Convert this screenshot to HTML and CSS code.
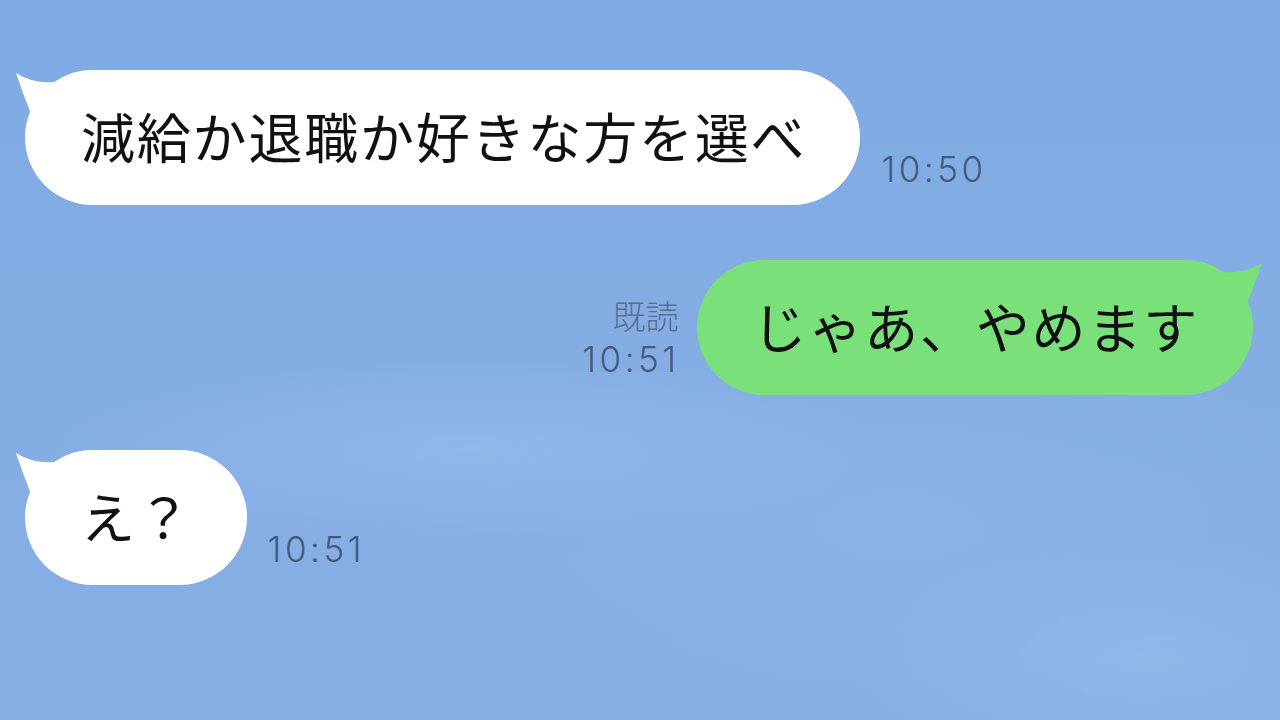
FILE: index.html
```html
<!DOCTYPE html>
<html lang="ja">
<head>
<meta charset="utf-8">
<title>Chat</title>
<link rel="stylesheet" href="styles.css">
</head>
<body>
<main class="chat">
  <div class="row row-left">
    <div class="bubble bubble-white">
      <svg class="tail tail-left" viewBox="0 0 60 60" width="60" height="60"><path d="M1 5 Q18 16 40 14 L52 45 L16 46 Q8 26 1 5 Z"/></svg>
      <span class="msg">減給か退職か好きな方を選べ</span>
    </div>
    <div class="meta"><span class="time">10:50</span></div>
  </div>
  <div class="row row-right">
    <div class="meta meta-right"><span class="read">既読</span><span class="time">10:51</span></div>
    <div class="bubble bubble-green">
      <svg class="tail tail-right" viewBox="0 0 60 60" width="60" height="60"><path d="M59 5 Q42 16 20 14 L8 45 L44 46 Q52 26 59 5 Z"/></svg>
      <span class="msg">じゃあ、やめます</span>
    </div>
  </div>
  <div class="row row-left">
    <div class="bubble bubble-white">
      <svg class="tail tail-left" viewBox="0 0 60 60" width="60" height="60"><path d="M1 5 Q18 16 40 14 L52 45 L16 46 Q8 26 1 5 Z"/></svg>
      <span class="msg">え？</span>
    </div>
    <div class="meta"><span class="time">10:51</span></div>
  </div>
</main>
</body>
</html>
```
FILE: styles.css
```css
html, body {
  margin: 0;
  padding: 0;
  width: 1280px;
  height: 720px;
  overflow: hidden;
}
body {
  background:
    radial-gradient(ellipse 420px 90px at 470px 450px, rgba(160, 196, 240, 0.45), rgba(160, 196, 240, 0) 100%),
    radial-gradient(ellipse 300px 120px at 1150px 660px, rgba(160, 196, 240, 0.4), rgba(160, 196, 240, 0) 100%),
    radial-gradient(ellipse 500px 200px at 900px 520px, rgba(150, 188, 236, 0.3), rgba(150, 188, 236, 0) 100%),
    linear-gradient(180deg, #80aae3 0%, #84ade4 50%, #87afe5 100%);
  font-family: "Noto Sans CJK JP", "Noto Sans", sans-serif;
}
.chat {
  display: flex;
  flex-direction: column;
  gap: 55px;
  padding: 70px 27px 0 25px;
}
.row {
  display: flex;
  align-items: flex-end;
}
.row-right {
  justify-content: flex-end;
}
.bubble {
  position: relative;
  height: 135px;
  border-radius: 68px;
  display: flex;
  align-items: center;
  padding: 0 54px 0 56px;
  box-sizing: border-box;
}
.bubble-white {
  background: #ffffff;
}
.bubble-white .tail {
  fill: #ffffff;
}
.bubble-green {
  background: #7ae07a;
  padding: 0 54px 0 56px;
}
.bubble-green .tail {
  fill: #7ae07a;
}
.tail {
  position: absolute;
  top: -2px;
}
.tail-left {
  left: -10px;
}
.tail-right {
  right: -10px;
}
.msg {
  font-size: 54px;
  letter-spacing: 1.8px;
  line-height: 1;
  color: #111111;
  white-space: nowrap;
  margin-top: -4px;
}
.meta {
  display: flex;
  flex-direction: column;
  margin: 0 0 18px 21px;
  color: #465b7b;
}
.meta-right {
  align-items: flex-end;
  margin: 0 17px 18px 0;
  gap: 10px;
}
.time {
  font-family: Inter, "Noto Sans", sans-serif;
  font-weight: 300;
  font-size: 35px;
  letter-spacing: 3.5px;
  line-height: 1;
}
.read {
  font-size: 33px;
  line-height: 1;
  color: #5a6f8f;
  font-weight: 300;
  margin-right: 1px;
}
```
